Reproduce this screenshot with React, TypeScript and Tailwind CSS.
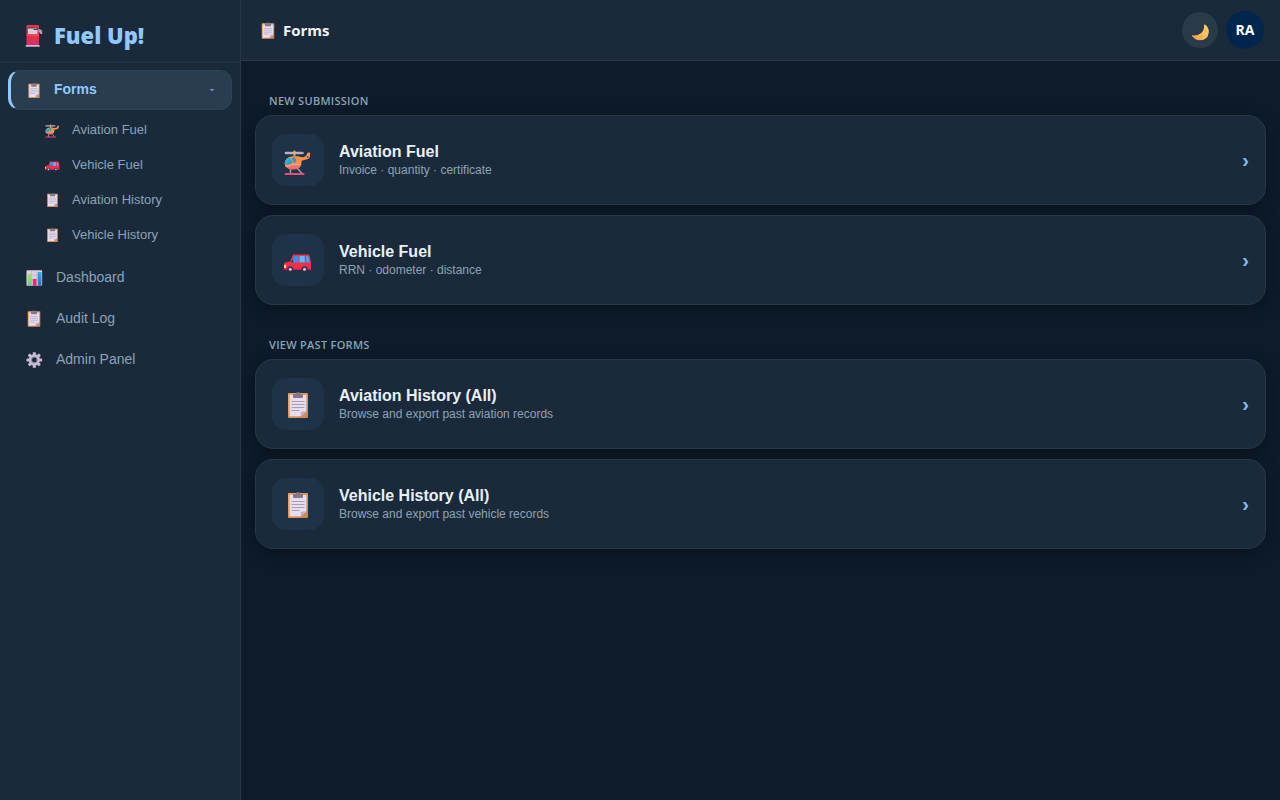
import { useState, type ReactNode } from "react";

type IconProps = { className?: string };

function Clipboard({ className }: IconProps) {
  return (
    <svg viewBox="0 0 32 32" className={className} aria-hidden>
      <defs>
        <linearGradient id="cb-board" x1="0" y1="0" x2="1" y2="1">
          <stop offset="0" stopColor="#EFA765" />
          <stop offset="1" stopColor="#D08450" />
        </linearGradient>
      </defs>
      <rect x="6" y="5" width="20" height="25" rx="1" fill="url(#cb-board)" />
      <path d="M7.700 7h16.600v16.500l-5.500 4.800H7.700z" fill="#E8DDF0" />
      <path d="M24.300 23.500l-5.500 5V24.300q0-.8.8-.8z" fill="#BFAFCB" />
      <path d="M9.500 13.500h13M9.500 16.500h13M9.500 19.500h13M9.500 22.500h8" stroke="#A99FB5" strokeWidth="1" />
      <path d="M11 6h3q.3-2 2-2t2 2h3v3q0 1-1 1h-8q-1 0-1-1z" fill="#84788A" />
    </svg>
  );
}

function Helicopter({ className }: IconProps) {
  return (
    <svg viewBox="0 0 32 32" className={className} aria-hidden>
      <defs>
        <linearGradient id="heli-body" x1="0" y1="0" x2="0" y2="1">
          <stop offset="0" stopColor="#FF9A48" />
          <stop offset=".6" stopColor="#FB8A4C" />
          <stop offset="1" stopColor="#E8657A" />
        </linearGradient>
        <linearGradient id="heli-glass" x1="0" y1="0" x2="1" y2="1">
          <stop offset="0" stopColor="#3FBCE4" />
          <stop offset="1" stopColor="#2593C6" />
        </linearGradient>
      </defs>
      <path d="M8.500 24.500V30M15.500 24.500l4.500 5" stroke="#A996B8" strokeWidth="1.500" />
      <path d="M3.500 30h18" stroke="#EA4B72" strokeWidth="2" strokeLinecap="round" />
      <path
        d="M10.500 12.300h6q3 1.200 4.500 1l3-1.300 1.500-3.200q2.700-.9 2.600.5l-.4 4q-.2 1.300-1.700 1.600l-6.400 1.800q.3 8.800-7.100 8.800H8.500q-5-1-5.900-6 .7-6.400 7.900-7.200z"
        fill="url(#heli-body)"
      />
      <path d="M2.700 20q.2-5 5-6.900l2.800 4.900q-1.500 3-5 2.700z" fill="url(#heli-glass)" />
      <path d="M9.500 14l3.700-.7q1 2.500.3 5.700l-2-.8z" fill="#2795C5" />
      <path d="M3 22q4 .8 8-1.700h8" fill="none" stroke="#FFC078" strokeWidth=".8" />
      <path d="M12.500 6.500v6" stroke="#EF9A4E" strokeWidth="2" />
      <rect x="2.700" y="7.800" width="19" height="2.400" rx="1" fill="#B9ADC3" />
      <path d="M11.500 9h2" stroke="#F3B05C" strokeWidth="2.400" />
      <circle cx="25.700" cy="13" r=".9" fill="#7A4A55" />
    </svg>
  );
}

function Car({ className }: IconProps) {
  return (
    <svg viewBox="0 0 32 32" className={className} aria-hidden>
      <path
        d="M11.500 10.500h14.700q1 0 1.300 1.200L29 18.500v6q0 1.500-1.200 1.500H3.500Q2 26 2 24.500V21q0-2.400 2-2.700l4.300-.7 2.300-6.200q.2-.9.900-.9z"
        fill="#EF3049"
      />
      <path d="M12 11.900h4.500v6.500H9.500z" fill="#3493E8" />
      <path d="M17.500 11.900h5.300v6.500h-5.300z" fill="#62B7FB" />
      <path d="M24.200 11.900h2.200l1.500 6.500h-3.700z" fill="#45A5F2" />
      <path d="M10.500 15.500l1.300 3H9.300z" fill="#37384F" />
      <path d="M2 20.800h2V24H2z" fill="#FFD45B" />
      <path d="M2 25.300h27" stroke="#C52454" strokeWidth="1.300" />
      <circle cx="8.300" cy="25.200" r="3" fill="#3B2B4C" />
      <circle cx="22.500" cy="25.200" r="3" fill="#3B2B4C" />
      <circle cx="8.300" cy="25.200" r="1.500" fill="#D6CBE0" />
      <circle cx="22.500" cy="25.200" r="1.500" fill="#D6CBE0" />
    </svg>
  );
}

function BarChart({ className }: IconProps) {
  return (
    <svg viewBox="0 0 32 32" className={className} aria-hidden>
      <defs>
        <linearGradient id="bar-green" x1="0" y1="0" x2="0" y2="1">
          <stop offset="0" stopColor="#A8E84F" />
          <stop offset="1" stopColor="#53CE8A" />
        </linearGradient>
        <linearGradient id="bar-blue" x1="0" y1="0" x2="0" y2="1">
          <stop offset="0" stopColor="#27B3F2" />
          <stop offset="1" stopColor="#3567CC" />
        </linearGradient>
      </defs>
      <rect x="4" y="5" width="25" height="25" rx="1.500" fill="#DCD3E2" />
      <path d="M4 13h25M4 21h25M12 5v25M20.500 5v25" stroke="#B9ADC1" strokeWidth="1" />
      <rect x="6" y="11" width="6" height="19" fill="url(#bar-green)" />
      <rect x="14" y="19" width="6" height="11" fill="#E52B72" />
      <rect x="22" y="8" width="6" height="22" fill="url(#bar-blue)" />
    </svg>
  );
}

function Gear({ className }: IconProps) {
  return (
    <svg viewBox="0 0 32 32" className={className} aria-hidden>
      <g fill="#C9BBD6">
        {[0, 45, 90, 135].map((angle) => (
          <rect key={angle} x="14" y="5" width="5" height="25" rx="1" transform={`rotate(${angle} 16.500 17.500)`} />
        ))}
      </g>
      <circle cx="16.500" cy="17.500" r="6.700" fill="none" stroke="#C9BBD6" strokeWidth="4.600" />
      <circle cx="16.500" cy="17.500" r="4.600" fill="none" stroke="#8D7C9D" strokeWidth="1.500" />
      <circle cx="16.500" cy="17.500" r="3.800" fill="#1B2A3A" />
    </svg>
  );
}

function FuelPump({ className }: IconProps) {
  return (
    <svg viewBox="0 0 24 24" className={className} aria-hidden>
      <defs>
        <linearGradient id="pump-body" x1="0" y1="0" x2="0" y2="1">
          <stop offset="0" stopColor="#E9344A" />
          <stop offset=".6" stopColor="#EA3048" />
          <stop offset="1" stopColor="#CC2E78" />
        </linearGradient>
      </defs>
      <path d="M17.700 7v11" stroke="#28252F" strokeWidth="2" />
      <rect x="3.500" y="1" width="12.500" height="21" rx="1" fill="url(#pump-body)" />
      <rect x="5" y="4" width="9.500" height="6" rx=".8" fill="#D8CBD9" />
      <path d="M5 4h9.500l1 1.500h-5" fill="none" stroke="#4D3E50" strokeWidth="1" />
      <path d="M3.500 11h12.500" stroke="#FF6777" strokeWidth=".8" />
      <path d="M15 5l3 .5 1.200 1.500v3h-1.700L16 8z" fill="#AAA0AF" />
      <rect x="2.700" y="21" width="14" height="1.800" rx=".5" fill="#D3B9D6" />
    </svg>
  );
}

function Moon({ className }: IconProps) {
  return (
    <svg viewBox="0 0 20 20" className={className} aria-hidden>
      <defs>
        <linearGradient id="moon" x1="1" y1="0" x2="0" y2="1">
          <stop offset="0" stopColor="#FFD66B" />
          <stop offset=".6" stopColor="#F8B958" />
          <stop offset="1" stopColor="#E99064" />
        </linearGradient>
      </defs>
      <path
        d="M15 2.500q4 3 3.800 7.500-.6 8-8.800 8.300Q5 18.200 2 14q-.2-.8.700-.7 5 .8 8.600-2.300 3.500-3.200 2.700-8 .2-.9 1-.5z"
        fill="url(#moon)"
      />
      <circle cx="16" cy="9" r=".8" fill="#E39A4D" />
      <circle cx="11.500" cy="14.500" r="1" fill="#E39A4D" />
    </svg>
  );
}

const SUB_LINKS = [
  { label: "Aviation Fuel", Icon: Helicopter },
  { label: "Vehicle Fuel", Icon: Car },
  { label: "Aviation History", Icon: Clipboard },
  { label: "Vehicle History", Icon: Clipboard },
];

const MAIN_LINKS = [
  { label: "Dashboard", Icon: BarChart },
  { label: "Audit Log", Icon: Clipboard },
  { label: "Admin Panel", Icon: Gear },
];

const SECTIONS = [
  {
    title: "New submission",
    cards: [
      { title: "Aviation Fuel", text: "Invoice · quantity · certificate", Icon: Helicopter },
      { title: "Vehicle Fuel", text: "RRN · odometer · distance", Icon: Car },
    ],
  },
  {
    title: "View past forms",
    cards: [
      { title: "Aviation History (All)", text: "Browse and export past aviation records", Icon: Clipboard },
      { title: "Vehicle History (All)", text: "Browse and export past vehicle records", Icon: Clipboard },
    ],
  },
];

function Sidebar() {
  const [open, setOpen] = useState(true);

  return (
    <aside className="w-[241px] shrink-0 border-r border-[#273849] bg-[#1b2a3a]">
      <div className="flex h-[63px] items-center gap-[7px] border-b-2 border-[#223142] px-[23px] pt-2.5">
        <FuelPump className="size-6" />
        <span className="pb-0.5 font-['Open_Sans',sans-serif] text-[22px] leading-7 font-extrabold text-[#90c8ff]">
          Fuel Up!
        </span>
      </div>

      <nav className="px-2 pt-[7px]">
        <button
          type="button"
          aria-expanded={open}
          onClick={() => setOpen(!open)}
          className="flex h-10 w-full items-center gap-[11px] rounded-xl border border-l-3 border-[#2d4257] border-l-[#90c8ff] bg-[#2a3d50] pr-4 pl-3.5 text-sm font-bold text-[#90c8ff]"
        >
          <Clipboard className="size-[18px]" />
          <span className="pb-0.5">Forms</span>
          <svg viewBox="0 0 6 4" className="ml-auto h-1 w-1.5" aria-hidden>
            <path d="M.5 1h5L3 3.500z" fill="#6590bd" />
          </svg>
        </button>

        {open && (
          <ul className="pt-0.5">
            {SUB_LINKS.map(({ label, Icon }) => (
              <li key={label}>
                <a href="#" className="flex h-[35px] items-center gap-[11px] pl-9 text-[13px] text-[#8ba3b8]">
                  <Icon className="size-[17px]" />
                  {label}
                </a>
              </li>
            ))}
          </ul>
        )}

        <ul className="pt-1">
          {MAIN_LINKS.map(({ label, Icon }) => (
            <li key={label}>
              <a href="#" className="flex h-[41px] items-center gap-3 pl-4 text-sm text-[#8ba3b8]">
                <Icon className="size-5" />
                {label}
              </a>
            </li>
          ))}
        </ul>
      </nav>
    </aside>
  );
}

function Header() {
  return (
    <header className="flex h-[61px] items-center justify-between border-b border-[#273849] bg-[#1b2a3a] pr-4 pl-[17px]">
      <h1 className="flex items-center gap-[5px] font-['Open_Sans',sans-serif] text-[15px] font-bold text-[#f0f5fa]">
        <Clipboard className="size-5" />
        Forms
      </h1>
      <div className="flex items-center gap-2">
        <button
          type="button"
          aria-label="Toggle theme"
          className="grid size-9 place-items-center rounded-full bg-[#2b3a49] pt-1"
        >
          <Moon className="size-5" />
        </button>
        <button
          type="button"
          className="size-[38px] rounded-full bg-[#00264d] font-['Open_Sans',sans-serif] text-sm font-bold text-white"
        >
          RA
        </button>
      </div>
    </header>
  );
}

function FormCard({ title, text, icon }: { title: string; text: string; icon: ReactNode }) {
  return (
    <a
      href="#"
      className="flex h-[90px] items-center gap-[15px] rounded-[18px] border border-[#273849] bg-[#1b2a3a] px-4 shadow-[0_4px_16px_rgba(0,0,0,0.3)]"
    >
      <span className="grid size-13 shrink-0 place-items-center rounded-[14px] bg-[#1e3348]">{icon}</span>
      <span className="flex-1 pt-0.5">
        <span className="block text-base leading-[18px] font-bold text-[#e8f0f8]">{title}</span>
        <span className="block text-xs leading-[18px] text-[#8ba3b8]">{text}</span>
      </span>
      <span className="text-xl font-bold text-[#83bdf0]" aria-hidden>
        ›
      </span>
    </a>
  );
}

export default function App() {
  return (
    <div className="flex min-h-screen bg-[#0d1b2a] font-['Liberation_Sans',Arial,sans-serif]">
      <Sidebar />
      <div className="min-w-0 flex-1">
        <Header />
        <main className="flex flex-col gap-8 px-3.5 pt-8">
          {SECTIONS.map((section) => (
            <section key={section.title}>
              <h2 className="px-3.5 pb-1.5 font-['Open_Sans',sans-serif] text-[11px] leading-4 font-semibold tracking-wide text-[#8ba3b8] uppercase">
                {section.title}
              </h2>
              <div className="flex flex-col gap-2.5">
                {section.cards.map(({ title, text, Icon }) => (
                  <FormCard key={title} title={title} text={text} icon={<Icon className="size-8" />} />
                ))}
              </div>
            </section>
          ))}
        </main>
      </div>
    </div>
  );
}
